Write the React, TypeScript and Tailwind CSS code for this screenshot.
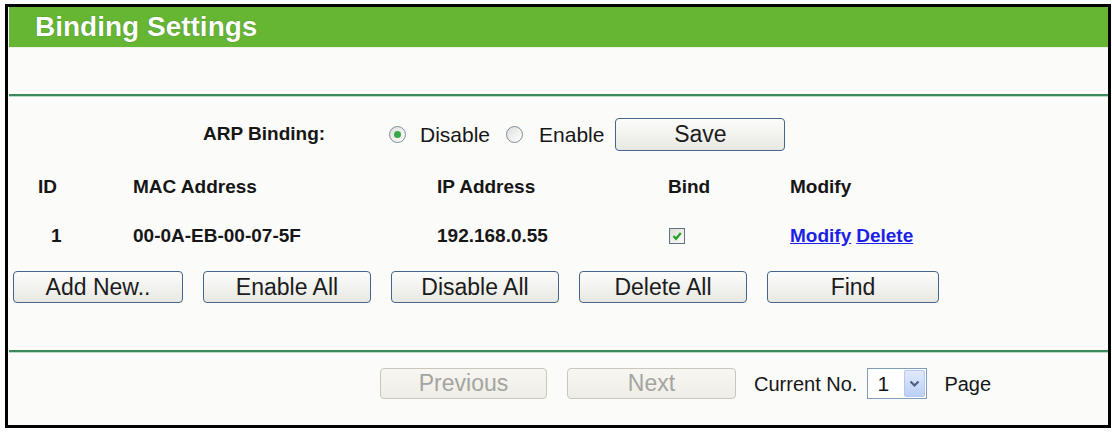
import React from 'react';

const font = { fontFamily: '"Liberation Sans", Arial, sans-serif' };

function Btn({ label, w, disabled = false }: { label: string; w: string; disabled?: boolean }) {
  return (
    <button
      className={
        disabled
          ? `${w} h-full rounded-[4px] border border-[#c9c7bb] bg-gradient-to-b from-[#f7f6f1] to-[#eeede6] text-[23px] leading-none text-[#a4a4a0]`
          : `${w} h-full rounded-[4px] border border-[#46658a] bg-gradient-to-b from-[#fcfcfb] to-[#e8e8e3] text-[23px] leading-none text-[#1c1c1c]`
      }
    >
      {label}
    </button>
  );
}

function Radio({ checked }: { checked?: boolean }) {
  return (
    <span className="flex h-[17px] w-[17px] items-center justify-center rounded-full border border-[#7b8d9e] bg-gradient-to-br from-[#dedfdc] to-[#ffffff]">
      {checked && <span className="h-[7px] w-[7px] rounded-full bg-[#37a84a]" />}
    </span>
  );
}

function Checkbox() {
  return (
    <span className="flex h-[16px] w-[16px] items-center justify-center border border-[#5e7386] bg-gradient-to-br from-[#dcdcd6] to-[#fbfbfa]">
      <svg width="12" height="12" viewBox="0 0 12 12">
        <path d="M2.5 6 L5 8.8 L9.8 3" fill="none" stroke="#21a121" strokeWidth="2.2" />
      </svg>
    </span>
  );
}

function Divider() {
  return (
    <div>
      <div className="h-[2px] bg-[#3b8a5c]" />
      <div className="h-px bg-[#b9dcc4]" />
    </div>
  );
}

export default function App() {
  return (
    <div className="h-[434px] w-[1112px] bg-white pl-[5px] pt-[4px]" style={font}>
      <div className="flex h-[424px] w-[1106px] flex-col border-[3px] border-black bg-[#fbfbfa] pl-px">
        <div className="flex h-[40px] items-center bg-[#66b634] pl-[26px]">
          <h1 className="text-[28px] font-bold leading-none text-white [text-shadow:0_0_1px_#2f6a14]">Binding Settings</h1>
        </div>
        <div className="h-px bg-[#eef3ea]" />

        <div className="mt-[46px]">
          <Divider />
        </div>

        <div className="mt-[21px] flex h-[33px] items-center text-[21px] text-[#161616]">
          <span className="ml-[194px] w-[186px] text-[19px] font-bold">ARP Binding:</span>
          <span className="flex items-center gap-[14px]">
            <Radio checked />
            <span>Disable</span>
          </span>
          <span className="ml-[16px] flex items-center gap-[16px]">
            <Radio />
            <span>Enable</span>
          </span>
          <span className="ml-[11px] h-full">
            <Btn label="Save" w="w-[170px]" />
          </span>
        </div>

        <div className="mt-[21px] grid h-[30px] grid-cols-[124px_304px_231px_122px_1fr] items-center text-[19px] font-bold text-[#161616]">
          <span className="pl-[29px]">ID</span>
          <span>MAC Address</span>
          <span>IP Address</span>
          <span>Bind</span>
          <span>Modify</span>
        </div>

        <div className="mt-[19px] grid h-[30px] grid-cols-[124px_304px_231px_122px_1fr] items-center text-[19px] font-bold text-[#161616]">
          <span className="pl-[42px]">1</span>
          <span>00-0A-EB-00-07-5F</span>
          <span>192.168.0.55</span>
          <span className="pl-px">
            <Checkbox />
          </span>
          <span className="flex gap-[5px] text-[#1b22e6]">
            <a className="underline">Modify</a>
            <a className="underline">Delete</a>
          </span>
        </div>

        <div className="mt-[20px] flex h-[32px] gap-[20px] pl-[4px]">
          <Btn label="Add New.." w="w-[170px]" />
          <Btn label="Enable All" w="w-[168px]" />
          <Btn label="Disable All" w="w-[168px]" />
          <Btn label="Delete All" w="w-[168px]" />
          <Btn label="Find" w="w-[172px]" />
        </div>

        <div className="mt-[47px]">
          <Divider />
        </div>

        <div className="mt-[15px] flex h-[31px] items-center pl-[371px] text-[20px] text-[#161616]">
          <span className="h-full">
            <Btn label="Previous" w="w-[167px]" disabled />
          </span>
          <span className="ml-[20px] h-full">
            <Btn label="Next" w="w-[169px]" disabled />
          </span>
          <span className="ml-[18px]">Current No.</span>
          <span className="ml-[10px] flex h-full w-[60px] items-center border border-[#7f9db9] bg-white">
            <span className="flex-1 pl-[9px] text-[21px]">1</span>
            <span className="mr-px flex h-[27px] w-[21px] items-center justify-center rounded-[2px] border border-[#b5c8ef] bg-gradient-to-b from-[#e1eafc] to-[#bccff5]">
              <svg width="11" height="8" viewBox="0 0 11 8">
                <path d="M1.5 1.5 L5.5 5.5 L9.5 1.5" fill="none" stroke="#4d6185" strokeWidth="2.2" />
              </svg>
            </span>
          </span>
          <span className="ml-[17px]">Page</span>
        </div>
      </div>
    </div>
  );
}
